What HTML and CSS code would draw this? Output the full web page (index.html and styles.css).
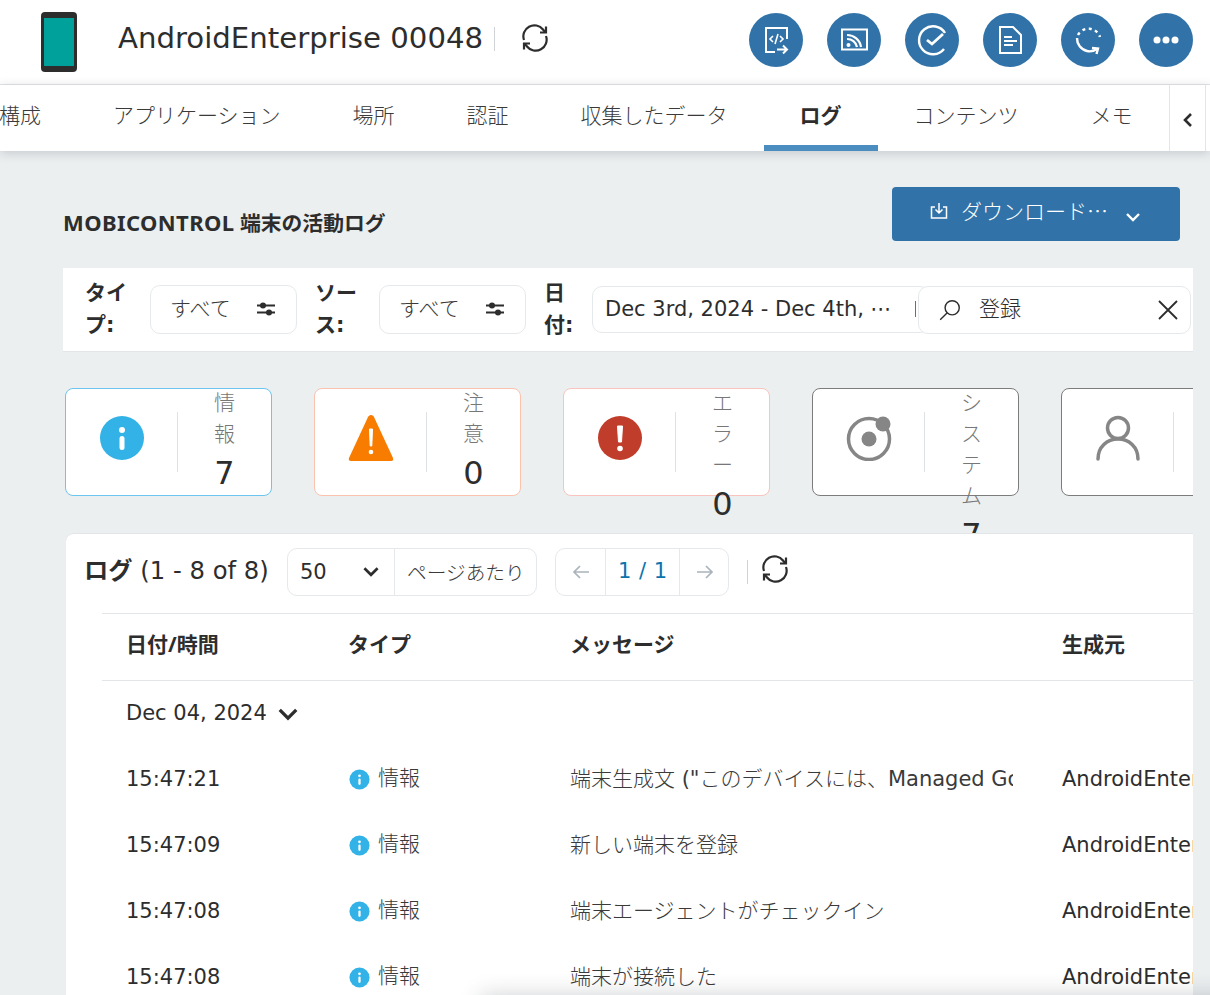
FILE: index.html
```html
<!DOCTYPE html>
<html lang="ja">
<head>
<meta charset="utf-8">
<title>AndroidEnterprise 00048</title>
<link rel="stylesheet" href="styles.css">
</head>
<body>
<header class="top">
  <svg class="phone" viewBox="0 0 36 60"><rect width="36" height="60" rx="4" fill="#2d2d2d"/><rect x="3" y="6" width="30" height="48" fill="#00a19a"/></svg>
  <h1 class="device">AndroidEnterprise 00048</h1>
  <span class="vsep"></span>
  <svg class="sync" viewBox="0 0 28 28"><use href="#sync"/></svg>
  <div class="actions">
    <span class="act"><svg viewBox="0 0 54 54" fill="none" stroke="#fff" stroke-width="2"><path d="M38 26V15H17v24h9"/><path d="M24 23l-3 3 3 3M31 23l3 3-3 3M29 21l-3 10" stroke-width="1.6"/><path d="M28 36.500h10M34 32.500l4 4-4 4"/></svg></span>
    <span class="act"><svg viewBox="0 0 54 54" fill="none" stroke="#fff" stroke-width="2"><rect x="15" y="16.500" width="25" height="20"/><path d="M20 26a10 10 0 0 1 10 8M20 22a14 14 0 0 1 14 12" stroke-width="2.200"/><circle cx="21.500" cy="32" r="2" fill="#fff" stroke="none"/></svg></span>
    <span class="act"><svg viewBox="0 0 54 54" fill="none" stroke="#fff" stroke-width="2.400"><path d="M39 36a14 14 0 1 1 1-16"/><path d="M22 27l5 4 11-10" stroke-width="2.800"/></svg></span>
    <span class="act"><svg viewBox="0 0 54 54" fill="none" stroke="#fff" stroke-width="2"><path d="M17 14h13l8 8v18H17z"/><path d="M21 24h8M21 28h13M21 32h9" stroke-width="2.200"/></svg></span>
    <span class="act"><svg viewBox="0 0 54 54" fill="none" stroke="#fff" stroke-width="2.400"><path d="M17 22a12 12 0 0 1 22 2" stroke-dasharray="3 3.500"/><path d="M16 25a13 13 0 0 0 10 13c4 1 7 0 10-2"/><path d="M31 35l6 .5-1.500 5.500" /></svg></span>
    <span class="act"><svg viewBox="0 0 54 54" fill="#fff"><circle cx="18" cy="27" r="3.500"/><circle cx="27" cy="27" r="3.500"/><circle cx="36" cy="27" r="3.500"/></svg></span>
  </div>
</header>

<nav class="tabs">
  <div class="tablist">
    <a class="tab">構成</a>
    <a class="tab">アプリケーション</a>
    <a class="tab">場所</a>
    <a class="tab">認証</a>
    <a class="tab">収集したデータ</a>
    <a class="tab active">ログ</a>
    <a class="tab">コンテンツ</a>
    <a class="tab">メモ</a>
  </div>
  <span class="scroller"><svg viewBox="0 0 12 16" fill="none" stroke="#2d2d2d" stroke-width="2.600"><path d="M9 2L3 8l6 6"/></svg></span>
</nav>

<main class="main">
  <div class="titlebar">
    <h2 class="pagetitle"><span class="pt-latin">MOBICONTROL</span> 端末の活動ログ</h2>
    <button class="download">
      <svg class="dl-icon" viewBox="0 0 20 20" fill="none" stroke="#fff" stroke-width="1.500"><path d="M6 6H2.500v11h15V6H14M10 2v10M6.500 8.500L10 12l3.500-3.500"/></svg>
      <span>ダウンロード⋯</span>
      <svg class="dl-chev" viewBox="0 0 16 10" fill="none" stroke="#fff" stroke-width="2.400"><path d="M2 2l6 6 6-6"/></svg>
    </button>
  </div>

  <section class="filters">
    <span class="flabel">タイプ:</span>
    <span class="chip">すべて<svg class="sliders" viewBox="0 0 20 16"><use href="#sliders"/></svg></span>
    <span class="flabel">ソース:</span>
    <span class="chip">すべて<svg class="sliders" viewBox="0 0 20 16"><use href="#sliders"/></svg></span>
    <span class="flabel date">日付:</span>
    <span class="datebox">Dec 3rd, 2024 - Dec 4th, ⋯<i class="tick"></i></span>
    <span class="search">
      <svg class="mag" viewBox="0 0 22 22" fill="none" stroke="#2d2d2d" stroke-width="1.300"><circle cx="13" cy="9" r="6.500"/><path d="M8.500 13.500L2 20"/></svg>
      <span class="query">登録</span>
      <svg class="close" viewBox="0 0 20 20" fill="none" stroke="#2d2d2d" stroke-width="1.800"><path d="M1 1l18 18M19 1L1 19"/></svg>
    </span>
  </section>

  <section class="cards">
    <div class="card c-info">
      <span class="card-icon"><svg viewBox="0 0 46 46"><use href="#info"/></svg></span>
      <div class="card-body"><div class="card-label">情報</div><div class="card-value">7</div></div>
    </div>
    <div class="card c-warn">
      <span class="card-icon"><svg viewBox="0 0 46 46"><path d="M23 0c1.500 0 2.500 1 3 2l19 41c.8 2-.2 3-2 3H3c-1.800 0-2.800-1-2-3L20 2c.5-1 1.500-2 3-2z" fill="#f77c00"/><path d="M21.500 14h3l-.7 17h-1.600z" fill="#fff" stroke="#fff" stroke-linejoin="round"/><circle cx="23" cy="37" r="2.300" fill="#fff"/></svg></span>
      <div class="card-body"><div class="card-label">注意</div><div class="card-value">0</div></div>
    </div>
    <div class="card c-err">
      <span class="card-icon"><svg viewBox="0 0 46 46"><circle cx="23" cy="23" r="22" fill="#c13d2b"/><path d="M20.500 11h5l-1 16h-3z" fill="#fff" stroke="#fff" stroke-linejoin="round"/><circle cx="23" cy="33.500" r="2.800" fill="#fff"/></svg></span>
      <div class="card-body"><div class="card-label">エラー</div><div class="card-value">0</div></div>
    </div>
    <div class="card c-sys">
      <span class="card-icon"><svg viewBox="0 0 46 46"><circle cx="23" cy="24" r="20.500" fill="none" stroke="#868686" stroke-width="3.500"/><circle cx="23" cy="24" r="7.500" fill="#868686"/><circle cx="37" cy="9" r="7.500" fill="#868686"/></svg></span>
      <div class="card-body"><div class="card-label">システム</div><div class="card-value">7</div></div>
    </div>
    <div class="card c-sys">
      <span class="card-icon"><svg viewBox="0 0 46 46" fill="none" stroke="#868686" stroke-width="3.500" stroke-linecap="round"><circle cx="23" cy="13" r="10.500"/><path d="M3 44c0-12 9-20 20-20s20 8 20 20"/></svg></span>
      <div class="card-body"><div class="card-label">ユーザー</div><div class="card-value">0</div></div>
    </div>
  </section>

  <section class="panel">
    <div class="toolbar">
      <div class="count"><b>ログ</b> (1 - 8 of 8)</div>
      <div class="pagesize">
        <span class="ps-value">50<svg class="chev" viewBox="0 0 16 10" fill="none" stroke="#2d2d2d" stroke-width="2.400"><path d="M2 2l6 6 6-6"/></svg></span>
        <span class="ps-text">ページあたり</span>
      </div>
      <div class="pager">
        <span class="pg-btn"><svg viewBox="0 0 18 14" fill="none" stroke="#a9b4bb" stroke-width="1.700"><path d="M17 7H2M8 1L2 7l6 6"/></svg></span>
        <span class="pg-num">1 / 1</span>
        <span class="pg-btn"><svg viewBox="0 0 18 14" fill="none" stroke="#a9b4bb" stroke-width="1.700"><path d="M1 7h15M10 1l6 6-6 6"/></svg></span>
      </div>
      <span class="tsep"></span>
      <svg class="sync small" viewBox="0 0 28 28"><use href="#sync"/></svg>
    </div>

    <div class="table">
      <div class="row head"><span>日付/時間</span><span>タイプ</span><span>メッセージ</span><span>生成元</span></div>
      <div class="group">Dec 04, 2024<svg class="chev big" viewBox="0 0 16 10" fill="none" stroke="#2d2d2d" stroke-width="2.400"><path d="M2 2l6 6 6-6"/></svg></div>
      <div class="row"><span>15:47:21</span><span class="type"><svg viewBox="0 0 46 46"><use href="#info"/></svg><span>情報</span></span><span class="msg">端末生成文<span class="lat"> ("</span>このデバイスには、<span class="lat">Managed Google Play</span> アカウントがありません")</span><span>AndroidEnterprise 00048</span></div>
      <div class="row"><span>15:47:09</span><span class="type"><svg viewBox="0 0 46 46"><use href="#info"/></svg><span>情報</span></span><span class="msg">新しい端末を登録</span><span>AndroidEnterprise 00048</span></div>
      <div class="row"><span>15:47:08</span><span class="type"><svg viewBox="0 0 46 46"><use href="#info"/></svg><span>情報</span></span><span class="msg">端末エージェントがチェックイン</span><span>AndroidEnterprise 00048</span></div>
      <div class="row"><span>15:47:08</span><span class="type"><svg viewBox="0 0 46 46"><use href="#info"/></svg><span>情報</span></span><span class="msg">端末が接続した</span><span>AndroidEnterprise 00048</span></div>
    </div>
  </section>
</main>
<div class="toast-shadow"></div>

<svg class="defs" width="0" height="0">
  <symbol id="sync" viewBox="0 0 28 28"><g fill="none" stroke="#2d2d2d" stroke-width="2.200"><path d="M3 16a11 11 0 0 1 19-10.500l2 2.500"/><path d="M25 2.500V8.500h-6"/><path d="M25 12a11 11 0 0 1-19 10.500l-2-2.500"/><path d="M3 25.500V19.500h6"/></g></symbol>
  <symbol id="sliders" viewBox="0 0 20 16"><g fill="#2d2d2d"><rect x="1" y="3.500" width="18" height="2"/><rect x="1" y="10.500" width="18" height="2"/><circle cx="7" cy="4.500" r="3"/><circle cx="13" cy="11.500" r="3"/></g></symbol>
  <symbol id="info" viewBox="0 0 46 46"><circle cx="23" cy="23" r="22" fill="#32b2e6"/><circle cx="23" cy="15" r="3" fill="#fff"/><rect x="20.500" y="21" width="5" height="14" rx="2.500" fill="#fff"/></symbol>
</svg>
</body>
</html>
```
FILE: styles.css
```css
* { box-sizing: border-box; }
html, body { margin: 0; height: 100%; overflow: hidden; }
body {
  background: #ebeff0;
  color: #2d2d2d;
  font-family: "DejaVu Sans", "Noto Sans CJK JP", sans-serif;
  font-size: 21px;
}
svg { display: block; flex: none; }
.defs { position: absolute; }

.top { height: 85px; background: #fff; border-bottom: 1px solid #e3e6e8; display: flex; align-items: center; padding-left: 41px; }
.phone { width: 36px; height: 60px; }
.device { margin: -8px 0 0 41px; font-size: 29.2px; font-weight: 400; white-space: nowrap; }
.vsep { width: 1px; height: 24px; background: #cfd3d6; margin: -6px 0 0 11px; }
.sync { width: 28px; height: 28px; margin: -9px 0 0 26px; }
.actions { margin-left: auto; margin-right: 17px; display: flex; gap: 24px; margin-bottom: 5px; }
.act { width: 54px; height: 54px; border-radius: 50%; background: #3173a8; display: block; }
.act svg { width: 54px; height: 54px; }

.tabs { height: 66px; background: #fff; display: flex; box-shadow: 0 2px 10px rgba(60,70,80,.22); position: relative; }
.tablist { width: 1206px; margin-left: -37px; display: flex; flex: none; overflow: hidden; }
.tab { padding: 0 36px 8px; display: flex; align-items: center; white-space: nowrap; color: #3a3a3a; font-family: "Noto Sans CJK JP", sans-serif; font-weight: 300; }
.tab.active { font-weight: 700; color: #2d2d2d; border-bottom: 6px solid #4b8dbe; padding-bottom: 2px; }
.scroller { width: 37px; border-left: 1px solid #e3e6e8; border-right: 1px solid #e3e6e8; display: flex; align-items: center; justify-content: center; }
.scroller svg { width: 12px; height: 16px; margin-top: 3px; }

.main { width: 1193px; height: 844px; overflow: hidden; padding-left: 63px; }
.titlebar { display: flex; align-items: flex-start; justify-content: space-between; padding-top: 36px; height: 117px; padding-right: 13px; }
.pagetitle { margin: 20px 0 0; font-family: "Noto Sans", "Noto Sans CJK JP", sans-serif; font-size: 20.8px; font-weight: 700; line-height: 30px; }
.pt-latin { font-size: 22px; letter-spacing: .4px; }
.download { width: 288px; height: 54px; background: #3173a8; color: #fff; border: 0; border-radius: 4px; font: inherit; display: flex; align-items: center; padding: 0 0 0 37px; }
.dl-icon { width: 20px; height: 20px; margin-top: -6px; }
.download span { margin: -8px 14px 0 12px; width: 150px; text-align: left; font-family: "Noto Sans CJK JP", sans-serif; font-weight: 300; }
.dl-chev { width: 16px; height: 10px; margin-top: 5px; }

.filters { height: 84px; background: #fff; border-bottom: 1px solid #e3e6e8; display: flex; align-items: center; padding-left: 22px; width: 1130px; }
.flabel { width: 44px; margin-top: -2px; font-weight: 700; line-height: 32px; flex: none; margin-right: 20px; word-break: break-all; }
.flabel:first-child { margin-right: 21px; }
.flabel.date { margin-right: 4px; }
.chip { width: 147px; height: 49px; flex: none; border: 1px solid #e6e9eb; border-radius: 10px; margin-right: 18px; display: flex; align-items: center; justify-content: space-between; padding: 0 20px 5px 19px; color: #3a3a3a; font-family: "Noto Sans CJK JP", sans-serif; font-weight: 300; }
.sliders { width: 20px; height: 16px; margin-top: 3px; }
.datebox { width: 338px; height: 47px; flex: none; border: 1px solid #e6e9eb; border-radius: 10px; display: flex; align-items: center; padding: 0 0 1px 12px; white-space: nowrap; overflow: hidden; }
.tick { width: 1px; height: 16px; background: #a0622d; flex: none; margin-left: 23px; }
.search { width: 273px; height: 48px; flex: none; margin-left: -12px; background: #fff; border: 1px solid #e6e9eb; border-radius: 10px; display: flex; align-items: center; padding-left: 19px; position: relative; }
.mag { width: 24px; height: 24px; }
.query { margin-left: 17px; margin-bottom: 5px; font-family: "Noto Sans CJK JP", sans-serif; font-weight: 300; }
.close { width: 20px; height: 20px; margin-left: auto; margin-right: 12px; }

.cards { display: flex; gap: 42px; padding: 36px 0 37px 2px; height: 181px; }
.card { width: 207px; height: 108px; flex: none; background: #fff; border: 1px solid #888; border-radius: 8px; display: flex; }
.c-info { border-color: #6cc5ee; }
.c-warn { border-color: #fbc3ae; }
.c-err { border-color: #f8c4bd; }
.c-sys { border-color: #7c7c7c; }
.card-icon { width: 112px; height: 106px; display: flex; align-items: center; justify-content: center; position: relative; flex: none; }
.card-icon svg { width: 46px; height: 46px; margin-top: -8px; }
.card-icon::after { content: ""; position: absolute; right: 0; top: 23px; height: 60px; width: 1px; background: #dfe2e4; }
.card-body { flex: 1; display: flex; flex-direction: column; align-items: center; min-width: 0; }
.card-label { width: 24px; margin-top: -3px; text-align: center; line-height: 31px; color: #777; word-break: break-all; font-family: "Noto Sans CJK JP", sans-serif; font-weight: 300; }
.card-value { font-size: 32px; line-height: 45px; margin-top: 3px; text-align: center; }

.panel { position: relative; background: #fff; margin-left: 3px; border-radius: 8px 0 0 0; border-top: 1px solid #e3e6e8; height: 500px; }
.toolbar { display: flex; align-items: center; height: 79px; padding: 0 0 0 18px; }
.count { font-size: 24.3px; white-space: nowrap; width: 185px; margin-right: 18px; padding-bottom: 6px; line-height: 32px; }
.pagesize { display: flex; width: 250px; height: 48px; border: 1px solid #e6e9eb; border-radius: 10px; margin-right: 18px; margin-bottom: 4px; }
.ps-value { width: 107px; border-right: 1px solid #e6e9eb; display: flex; align-items: center; padding: 0 14px 0 12px; justify-content: space-between; }
.chev { width: 18px; height: 11px; }
.ps-text { padding-left: 12px; font-size: 19.7px; display: flex; align-items: center; color: #3a3a3a; white-space: nowrap; font-family: "Noto Sans CJK JP", sans-serif; font-weight: 300; }
.pager { display: flex; width: 174px; height: 48px; border: 1px solid #e6e9eb; border-radius: 10px; margin-bottom: 4px; }
.pg-btn { width: 49px; display: flex; align-items: center; justify-content: center; flex: none; }
.pg-btn svg { width: 18px; height: 14px; }
.pg-num { width: 75px; flex: none; border-left: 1px solid #e6e9eb; border-right: 1px solid #e6e9eb; text-align: center; line-height: 44px; color: #0b74ad; word-spacing: 1px; }
.tsep { width: 1px; height: 24px; background: #cfd3d6; margin: 0 0 4px 18px; }
.sync.small { margin: -9px 0 0 13px; width: 28px; height: 28px; }

.table { margin-left: 36px; border-top: 1px solid #e3e6e8; }
.row { display: grid; grid-template-columns: 222px 222px 492px 1fr; height: 66px; padding-left: 24px; align-items: center; white-space: nowrap; overflow: hidden; }
.row > span { min-width: 0; overflow: hidden; }
.row .msg { width: 443px; color: #3a3a3a; height: 34px; font-family: "Noto Sans CJK JP", sans-serif; font-weight: 300; }
.lat { font-family: "DejaVu Sans", sans-serif; font-weight: 400; }
.row.head { height: 67px; font-weight: 700; font-family: "Noto Sans", "Noto Sans CJK JP", sans-serif; border-bottom: 1px solid #e3e6e8; padding-bottom: 9px; }
.group { height: 65px; padding-left: 24px; display: flex; align-items: center; gap: 10px; padding-bottom: 2px; }
.chev.big { width: 22px; height: 14px; margin-top: 3px; }
.row > .type { display: flex; align-items: center; gap: 8px; color: #3a3a3a; padding-left: 1px; overflow: visible; font-family: "Noto Sans CJK JP", sans-serif; font-weight: 300; }
.type span { margin-top: -7px; }
.type svg { width: 21px; height: 21px; }

.toast-shadow { position: absolute; left: 480px; right: -40px; bottom: -30px; height: 30px; border-radius: 8px; box-shadow: 0 0 22px rgba(40,50,60,.22); }
```
